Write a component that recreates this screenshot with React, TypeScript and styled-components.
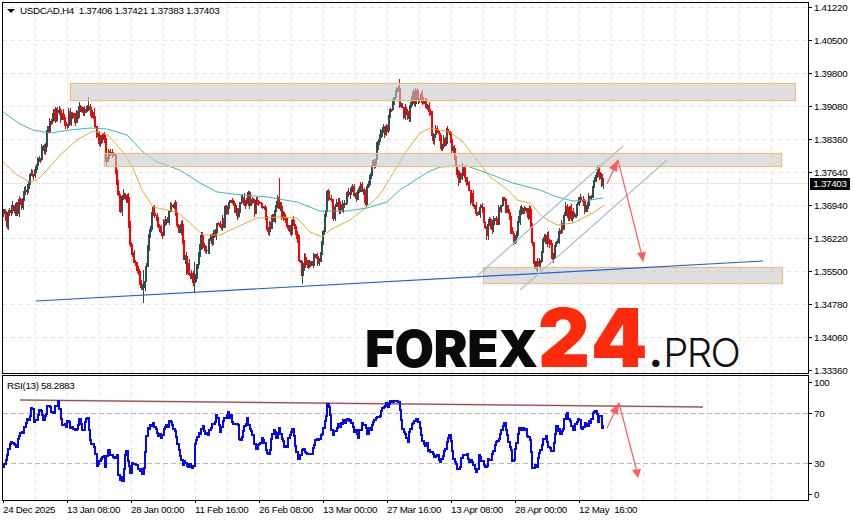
import React from 'react';
import styled, { createGlobalStyle } from 'styled-components';

type Pt = [number, number];

const PRICE_PATH: Pt[] = [
  [3, 215], [7, 222], [12, 207], [18, 208], [25, 195], [28, 183], [32, 167], [35, 173], [42, 152], [45, 155],
  [47, 137], [50, 125], [58, 108], [63, 120], [70, 117], [75, 120], [80, 110], [83, 115], [88, 103], [93, 120],
  [98, 140], [105, 140], [105, 153], [112, 157], [115, 162], [117, 190], [120, 207], [127, 193], [129, 223],
  [131, 247], [135, 267], [142, 287], [145, 283], [148, 240], [152, 217], [155, 208], [162, 230], [170, 207],
  [175, 205], [178, 227], [182, 220], [183, 260], [192, 273], [194, 288], [197, 260], [202, 240], [207, 247],
  [217, 230], [223, 223], [228, 203], [237, 210], [243, 203], [248, 198], [253, 207], [262, 203], [268, 230],
  [273, 217], [278, 198], [283, 213], [290, 233], [293, 217], [297, 230], [300, 267], [302, 273], [305, 253],
  [310, 270], [315, 253], [320, 257], [323, 233], [327, 193], [332, 200], [333, 217], [338, 207], [347, 197],
  [352, 187], [357, 197], [363, 187], [365, 203], [370, 177], [375, 157], [382, 133], [387, 127], [393, 97],
  [398, 93], [402, 107], [407, 120], [412, 100], [418, 92], [423, 103], [430, 108], [432, 133], [440, 137],
  [442, 147], [448, 127], [453, 153], [458, 180], [463, 170], [470, 193], [477, 217], [482, 205], [485, 230],
  [492, 223], [500, 213], [503, 200], [510, 220], [513, 247], [518, 217], [525, 208], [530, 213], [533, 253],
  [537, 270], [542, 247], [547, 237], [553, 257], [560, 233], [567, 207], [573, 220], [580, 197], [585, 207],
  [592, 190], [598, 173], [603, 183],
];

const TEAL_MA: Pt[] = [
  [3, 112], [20, 124], [33, 130], [50, 133], [70, 130], [90, 128], [107, 129], [127, 135], [143, 152], [157, 162],
  [180, 170], [200, 183], [217, 192], [233, 194], [267, 197], [297, 202], [320, 211], [347, 211], [367, 208],
  [387, 202], [400, 190], [428, 172], [440, 167], [455, 166], [467, 166], [487, 173], [513, 183], [540, 190],
  [557, 197], [573, 201], [590, 200], [603, 198],
];

const GOLD_MA: Pt[] = [
  [3, 162], [17, 175], [30, 182], [37, 180], [47, 170], [60, 155], [77, 140], [93, 131], [108, 135], [123, 152],
  [133, 168], [142, 190], [153, 207], [177, 212], [190, 223], [203, 235], [220, 235], [237, 227], [257, 218],
  [280, 217], [297, 218], [310, 232], [322, 237], [330, 230], [350, 220], [363, 210], [377, 198], [383, 190],
  [405, 153], [420, 133], [430, 128], [450, 132], [463, 142], [477, 160], [490, 177], [508, 190], [517, 200],
  [530, 203], [543, 217], [557, 225], [573, 223], [593, 213], [604, 205],
];

const RSI_PATH: Pt[] = [
  [3, 467], [7, 457], [10, 445], [17, 445], [18, 435], [23, 433], [27, 418], [28, 425], [32, 403], [34, 425],
  [40, 410], [43, 423], [48, 403], [52, 415], [58, 403], [62, 428], [68, 423], [73, 432], [80, 420], [82, 433],
  [87, 417], [90, 438], [95, 450], [97, 465], [103, 453], [105, 467], [107, 447], [112, 458], [117, 457], [117, 477],
  [122, 480], [126, 447], [130, 476], [132, 463], [143, 472], [147, 432], [153, 422], [160, 437], [170, 422],
  [177, 440], [182, 463], [193, 468], [195, 440], [202, 427], [207, 435], [217, 415], [220, 430], [227, 413],
  [238, 428], [239, 440], [247, 420], [253, 440], [257, 448], [262, 438], [268, 457], [273, 427], [277, 438],
  [278, 428], [286, 450], [292, 428], [298, 462], [303, 450], [312, 452], [315, 442], [320, 440], [328, 403],
  [332, 433], [337, 427], [348, 418], [353, 427], [358, 438], [362, 422], [367, 432], [380, 412], [392, 400],
  [398, 403], [402, 427], [407, 443], [410, 427], [417, 418], [422, 438], [430, 452], [433, 452], [440, 462],
  [445, 450], [449, 433], [453, 458], [458, 472], [463, 452], [468, 458], [477, 473], [478, 453], [485, 467],
  [493, 453], [497, 442], [504, 423], [510, 447], [513, 465], [518, 428], [523, 428], [530, 438], [532, 467],
  [537, 467], [538, 455], [545, 435], [552, 455], [556, 428], [562, 432], [566, 413], [573, 432], [578, 417],
  [580, 427], [589, 423], [596, 406], [597, 422], [600, 415], [602, 428], [604, 427],
];

const SPIKES: { x: number; top: number; bottom: number; up: boolean }[] = [
  { x: 88, top: 97, bottom: 108, up: true },
  { x: 143, top: 270, bottom: 303, up: true },
  { x: 194, top: 262, bottom: 293, up: true },
  { x: 279, top: 178, bottom: 205, up: false },
  { x: 302, top: 262, bottom: 284, up: true },
  { x: 399, top: 79, bottom: 100, up: false },
  { x: 537, top: 258, bottom: 272, up: false },
];

const PRICES = ['1.41220', '1.40500', '1.39800', '1.39080', '1.38360', '1.37640', '1.36940', '1.36220', '1.35500', '1.34780', '1.34060', '1.33360'];
const TIMES = ['24 Dec 2025', '13 Jan 08:00', '28 Jan 00:00', '11 Feb 16:00', '26 Feb 08:00', '13 Mar 00:00', '27 Mar 16:00', '13 Apr 08:00', '28 Apr 00:00', '12 May\u00a0 16:00'];
const RSI_TICKS = [{ label: '100', h: 31 }, { label: '70', h: 50 }, { label: '30', h: 31 }, { label: '0', h: 12 }];

const random = (seed: number) => () => {
  seed = (seed + 0x6d2b79f5) | 0;
  let t = Math.imul(seed ^ (seed >>> 15), 1 | seed);
  t = (t + Math.imul(t ^ (t >>> 7), 61 | t)) ^ t;
  return ((t ^ (t >>> 14)) >>> 0) / 4294967296;
};

const interp = (pts: Pt[], x: number) => {
  for (let i = 1; i < pts.length; i++) {
    if (x <= pts[i][0]) {
      const [x0, y0] = pts[i - 1];
      const [x1, y1] = pts[i];
      return x1 === x0 ? y1 : y0 + ((y1 - y0) * (x - x0)) / (x1 - x0);
    }
  }
  return pts[pts.length - 1][1];
};

const buildBars = () => {
  const rnd = random(24);
  const bars: { x: number; hi: number; lo: number; top: number; bot: number; up: boolean }[] = [];
  let prev = PRICE_PATH[0][1];
  for (let x = 3; x <= 604; x += 1.34) {
    const close = interp(PRICE_PATH, x) + (rnd() - 0.5) * 15;
    const top = Math.min(prev, close);
    const bot = Math.max(prev, close) + 1;
    bars.push({ x, top, bot, hi: top - rnd() * 4, lo: bot + rnd() * 4, up: close < prev });
    prev = close;
  }
  return bars;
};

const buildRsi = () => {
  const rnd = random(13);
  let d = `M3 ${RSI_PATH[0][1]}`;
  for (let x = 4.3; x <= 604; x += 1.34) {
    const y = interp(RSI_PATH, x) + (rnd() - 0.5) * 6;
    d += `H${x.toFixed(1)}V${y.toFixed(1)}`;
  }
  return d;
};

const BARS = buildBars();
const RSI_D = buildRsi();
const toPoints = (pts: Pt[]) => pts.map(([x, y]) => `${x},${y}`).join(' ');
const range = (from: number, count: number, step: number) => Array.from({ length: count }, (_, i) => from + i * step);

const GlobalStyle = createGlobalStyle`
  html, body {
    margin: 0;
    background: #fff;
  }
`;

const Page = styled.div`
  width: 854px;
  height: 521px;
  overflow: hidden;
  box-sizing: border-box;
  padding: 2px 0 0 2px;
  background: #fff;
  color: #000;
  font-family: "Liberation Sans", Arial, sans-serif;
  font-size: 9.8px;
  letter-spacing: -0.3px;
  display: grid;
  grid-template-columns: 807px 45px;
  grid-template-rows: 372px 126px 20px;
  row-gap: 0;
`;

const Pane = styled.div`
  position: relative;
  box-sizing: border-box;
  border: 1px solid #000;
`;

const RsiPane = styled(Pane)`
  margin-top: 1px;
  height: 126px;
`;

const Plot = styled.svg`
  display: block;
  width: 805px;
  height: 100%;
`;

const Legend = styled.div`
  position: absolute;
  left: 4px;
  top: 2px;
  display: flex;
  align-items: center;
  gap: 5px;
  white-space: pre;
  line-height: 12px;
`;

const DropMark = styled.span`
  width: 0;
  height: 0;
  border-left: 4px solid transparent;
  border-right: 4px solid transparent;
  border-top: 4px solid #000;
`;

const RsiLegend = styled.div`
  position: absolute;
  left: 4px;
  top: 4px;
  line-height: 12px;
`;

const Logo = styled.div`
  position: absolute;
  left: 362px;
  bottom: -6px;
  display: flex;
  align-items: baseline;
  white-space: nowrap;
  font-family: Inter, "Liberation Sans", sans-serif;
`;

const LogoBlack = styled.span`
  font-size: 51px;
  font-weight: 900;
  color: #0a0a0a;
  letter-spacing: -0.4px;
`;

const LogoRed = styled.span`
  font-size: 81px;
  line-height: 81px;
  font-weight: 900;
  color: #ff2a0c;
  letter-spacing: 2px;
`;

const LogoThin = styled.span`
  font-size: 40px;
  font-weight: 300;
  color: #111;
  margin-left: -1px;
  letter-spacing: -1.6px;
`;

const LogoDot = styled.span`
  font-weight: 800;
  margin-right: 2px;
`;

const PriceAxis = styled.div`
  position: relative;
  display: flex;
  flex-direction: column;
  height: 372px;
`;

const RsiAxis = styled.div`
  display: flex;
  flex-direction: column;
  padding-top: 3px;
`;

const Tick = styled.div<{ $h: number }>`
  position: relative;
  flex: none;
  height: ${(p) => p.$h}px;
  padding-left: 5px;
  line-height: 11px;
  &::before {
    content: '';
    position: absolute;
    left: 0;
    top: 5px;
    width: 3px;
    height: 1px;
    background: #000;
  }
`;

const CurrentPrice = styled.div`
  position: absolute;
  left: 1px;
  top: 176px;
  width: 40px;
  height: 12px;
  line-height: 12px;
  text-align: center;
  background: #000;
  color: #fff;
`;

const TimeAxis = styled.div`
  grid-column: 1 / 3;
  display: flex;
  padding-top: 2px;
  margin-left: 1px;
`;

const TimeCell = styled.div`
  position: relative;
  flex: none;
  width: 64px;
  padding-top: 1px;
  white-space: nowrap;
  line-height: 14px;
  &::before {
    content: '';
    position: absolute;
    left: 0;
    top: -2px;
    width: 1px;
    height: 3px;
    background: #000;
  }
`;

const GridLines: React.FC<{ xs: number[]; ys: number[]; top: number; bottom: number }> = ({ xs, ys, top, bottom }) => (
  <g stroke="#e4e4e4" strokeWidth={1} strokeDasharray="4 4" shapeRendering="crispEdges">
    {xs.map((x) => (
      <line key={x} x1={x} x2={x} y1={top} y2={bottom} />
    ))}
    {ys.map((y) => (
      <line key={y} x1={3} x2={808} y1={y} y2={y} />
    ))}
  </g>
);

const Zone: React.FC<{ x: number; y: number; w: number; h: number }> = ({ x, y, w, h }) => (
  <rect x={x} y={y} width={w} height={h} fill="#cbcbcb" fillOpacity={0.5} stroke="#f0c070" strokeWidth={1} filter="url(#zoneGlow)" />
);

const Arrow: React.FC<{ points: string; head: string }> = ({ points, head }) => (
  <g opacity={0.9}>
    <polyline points={points} fill="none" stroke="#ff4d4d" strokeWidth={1.2} />
    <polygon points={head} fill="#ff4d4d" />
  </g>
);

const MainChart = () => (
  <Plot viewBox="3 3 805 370">
    <defs>
      <filter id="zoneGlow" x="-2%" y="-40%" width="104%" height="180%">
        <feDropShadow dx="0" dy="0" stdDeviation="1.4" floodColor="#aaa" floodOpacity="0.3" />
      </filter>
    </defs>
    <GridLines xs={range(35.5, 24, 32)} ys={range(7.5, 12, 33)} top={3} bottom={373} />
    <line x1={3} x2={808} y1={183.5} y2={183.5} stroke="#e6e6e6" strokeWidth={1} />
    <g shapeRendering="crispEdges">
      {BARS.map((b) => (
        <g key={b.x} stroke={b.up ? '#2f4f4f' : '#ff0000'}>
          <line x1={b.x} x2={b.x} y1={b.hi} y2={b.lo} strokeWidth={1} />
          <line x1={b.x} x2={b.x} y1={b.top} y2={b.bot} strokeWidth={2} />
        </g>
      ))}
      {SPIKES.map((s) => (
        <line key={s.x} x1={s.x} x2={s.x} y1={s.top} y2={s.bottom} strokeWidth={1} stroke={s.up ? '#2f4f4f' : '#ff0000'} />
      ))}
    </g>
    <polyline points={toPoints(TEAL_MA)} fill="none" stroke="#20b2aa" strokeWidth={0.9} />
    <polyline points={toPoints(GOLD_MA)} fill="none" stroke="#daa520" strokeWidth={0.9} />
    <Zone x={70.5} y={83.5} w={725} h={17} />
    <Zone x={104.5} y={153.5} w={677} h={13} />
    <Zone x={483.5} y={267.5} w={299} h={16} />
    <line x1={36} y1={301} x2={763} y2={261} stroke="#1f5ce8" strokeWidth={1.2} />
    <line x1={477} y1={276} x2={623} y2={146} stroke="#a9bfcf" strokeWidth={1.2} />
    <line x1={520} y1={290} x2={667} y2={160} stroke="#a9bfcf" strokeWidth={1.2} />
    <Arrow points="607,184 618,160" head="618,160 609,168 617,172" />
    <Arrow points="618,160 642,256" head="643,262 637,253 646,252" />
  </Plot>
);

const RsiChart = () => (
  <Plot viewBox="3 376 805 124">
    <GridLines xs={range(35.5, 24, 32)} ys={[]} top={376} bottom={500} />
    <g stroke="#b8b8b8" strokeWidth={1} strokeDasharray="5 3" shapeRendering="crispEdges">
      <line x1={3} x2={808} y1={413.5} y2={413.5} />
      <line x1={3} x2={808} y1={463.5} y2={463.5} />
    </g>
    <line x1={20} y1={400} x2={703} y2={407} stroke="#d8bcbc" strokeWidth={2} />
    <line x1={20} y1={400} x2={703} y2={407} stroke="#8b3a3a" strokeWidth={0.9} />
    <path d={RSI_D} fill="none" stroke="#0808f0" strokeWidth={2} shapeRendering="crispEdges" />
    <Arrow points="607,428 619,403" head="619,403 610,411 618,415" />
    <Arrow points="619,403 637,472" head="638,478 632,470 641,469" />
  </Plot>
);

export default function App() {
  return (
    <Page>
      <GlobalStyle />
      <Pane>
        <MainChart />
        <Legend>
          <DropMark />
          <span>USDCAD,H4  1.37406 1.37421 1.37383 1.37403</span>
        </Legend>
        <Logo>
          <LogoBlack>FOREX</LogoBlack>
          <LogoRed>24</LogoRed>
          <LogoThin>
            <LogoDot>.</LogoDot>PRO
          </LogoThin>
        </Logo>
      </Pane>
      <PriceAxis>
        {PRICES.map((p) => (
          <Tick key={p} $h={33}>
            {p}
          </Tick>
        ))}
        <CurrentPrice>1.37403</CurrentPrice>
      </PriceAxis>
      <RsiPane>
        <RsiChart />
        <RsiLegend>RSI(13) 58.2883</RsiLegend>
      </RsiPane>
      <RsiAxis>
        {RSI_TICKS.map((t) => (
          <Tick key={t.label} $h={t.h}>
            {t.label}
          </Tick>
        ))}
      </RsiAxis>
      <TimeAxis>
        {TIMES.map((t) => (
          <TimeCell key={t}>{t}</TimeCell>
        ))}
      </TimeAxis>
    </Page>
  );
}
